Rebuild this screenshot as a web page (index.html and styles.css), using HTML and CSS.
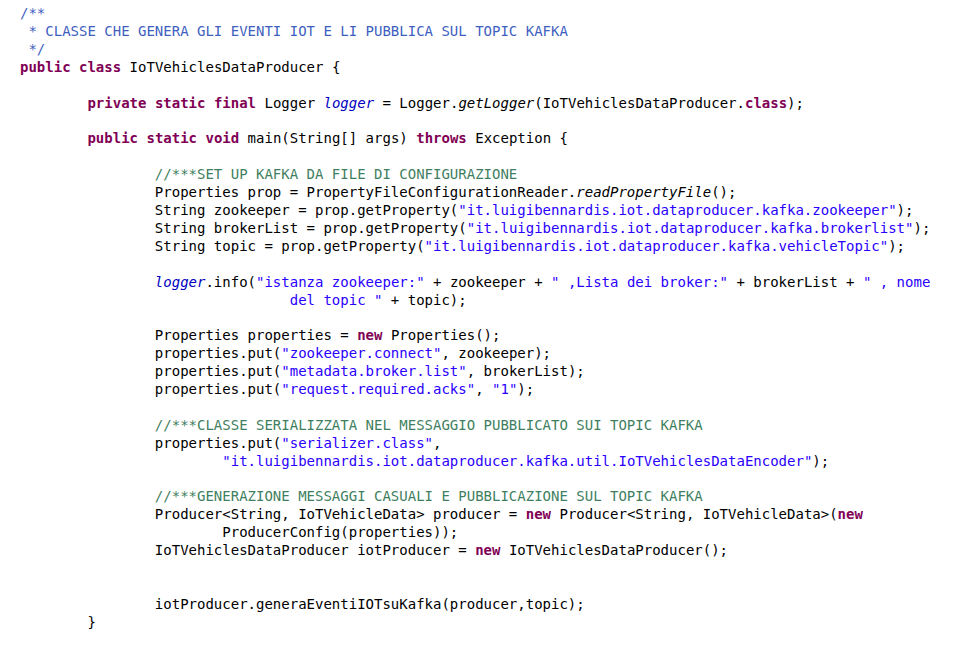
FILE: index.html
```html
<!DOCTYPE html>
<html lang="it">
<head>
<meta charset="utf-8">
<title>IoTVehiclesDataProducer</title>
<link rel="stylesheet" href="styles.css">
</head>
<body>
<pre class="code"><span class="doc">/**
 * CLASSE CHE GENERA GLI EVENTI IOT E LI PUBBLICA SUL TOPIC KAFKA
 */</span>
<span class="kw">public</span> <span class="kw">class</span> IoTVehiclesDataProducer {

	<span class="kw">private</span> <span class="kw">static</span> <span class="kw">final</span> Logger <span class="sf">logger</span> = Logger.<span class="sm">getLogger</span>(IoTVehiclesDataProducer.<span class="kw">class</span>);

	<span class="kw">public</span> <span class="kw">static</span> <span class="kw">void</span> main(String[] args) <span class="kw">throws</span> Exception {

		<span class="cm">//***SET UP KAFKA DA FILE DI CONFIGURAZIONE</span>
		Properties prop = PropertyFileConfigurationReader.<span class="sm">readPropertyFile</span>();
		String zookeeper = prop.getProperty(<span class="str">"it.luigibennardis.iot.dataproducer.kafka.zookeeper"</span>);
		String brokerList = prop.getProperty(<span class="str">"it.luigibennardis.iot.dataproducer.kafka.brokerlist"</span>);
		String topic = prop.getProperty(<span class="str">"it.luigibennardis.iot.dataproducer.kafka.vehicleTopic"</span>);

		<span class="sf">logger</span>.info(<span class="str">"istanza zookeeper:"</span> + zookeeper + <span class="str">" ,Lista dei broker:"</span> + brokerList + <span class="str">" , nome</span>
<span class="str">				del topic "</span> + topic);

		Properties properties = <span class="kw">new</span> Properties();
		properties.put(<span class="str">"zookeeper.connect"</span>, zookeeper);
		properties.put(<span class="str">"metadata.broker.list"</span>, brokerList);
		properties.put(<span class="str">"request.required.acks"</span>, <span class="str">"1"</span>);

		<span class="cm">//***CLASSE SERIALIZZATA NEL MESSAGGIO PUBBLICATO SUI TOPIC KAFKA</span>
		properties.put(<span class="str">"serializer.class"</span>,
			<span class="str">"it.luigibennardis.iot.dataproducer.kafka.util.IoTVehiclesDataEncoder"</span>);

		<span class="cm">//***GENERAZIONE MESSAGGI CASUALI E PUBBLICAZIONE SUL TOPIC KAFKA</span>
		Producer&lt;String, IoTVehicleData&gt; producer = <span class="kw">new</span> Producer&lt;String, IoTVehicleData&gt;(<span class="kw">new</span>
			ProducerConfig(properties));
		IoTVehiclesDataProducer iotProducer = <span class="kw">new</span> IoTVehiclesDataProducer();


		iotProducer.generaEventiIOTsuKafka(producer,topic);
	}</pre>
</body>
</html>
```

FILE: styles.css
```css
html, body {
  margin: 0;
  padding: 0;
  background: #ffffff;
}

.code {
  margin: 0;
  padding: 5px 0 0 20px;
  font-family: "DejaVu Sans Mono", "Liberation Mono", monospace;
  font-size: 14px;
  line-height: 17.9px;
  tab-size: 8;
  -moz-tab-size: 8;
  color: #000000;
  white-space: pre;
}

.kw {
  color: #7f0055;
  font-weight: bold;
}

.doc {
  color: #3f5fbf;
}

.cm {
  color: #3f7f5f;
}

.str {
  color: #2a00ff;
}

.sf {
  color: #0000c0;
  font-style: italic;
}

.sm {
  font-style: italic;
}
```
